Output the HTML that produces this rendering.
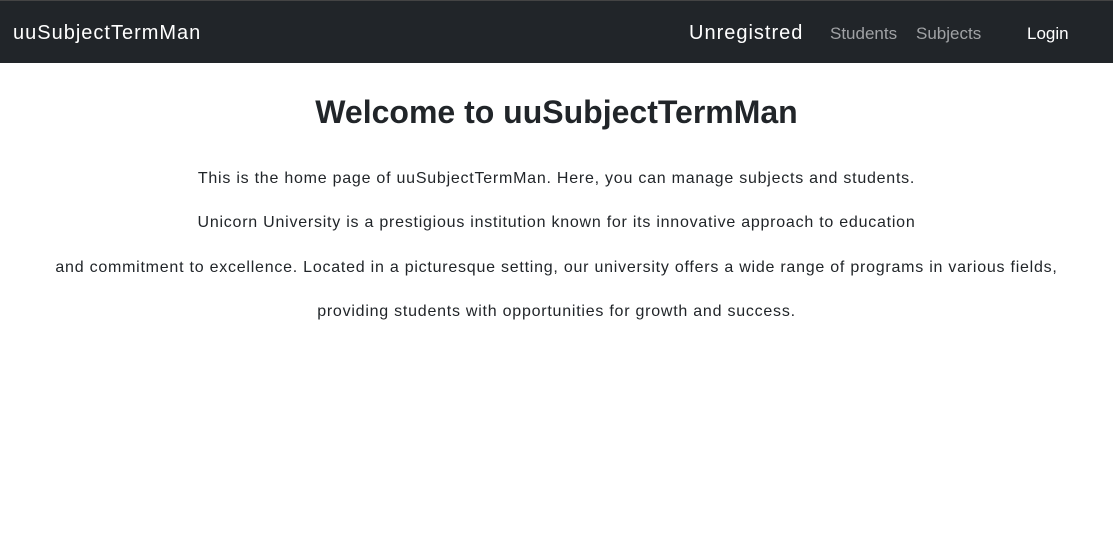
<!DOCTYPE html>
<html><head><style>
body{margin:0;font-family:"Liberation Sans",sans-serif;background:#fff;color:#212529;width:1113px;height:558px;overflow:hidden}
.nav{position:absolute;top:0;left:0;width:1113px;height:62px;background:#212529;border-top:1px solid #444}
.nav span{position:absolute;top:1px;line-height:63px}
h1{position:absolute;top:92px;width:100%;text-align:center;margin:0;font-size:32px;font-weight:bold;line-height:40px}
p{position:absolute;width:100%;text-align:center;margin:0;font-size:16px;line-height:20px;letter-spacing:0.76px}
</style></head><body>
<div class="nav">
<span style="left:13px;font-size:20px;color:#fff;letter-spacing:1px">uuSubjectTermMan</span>
<span style="left:689px;font-size:20px;color:#fff;letter-spacing:1px">Unregistred</span>
<span style="left:830px;font-size:17px;color:#a0a2a5">Students</span>
<span style="left:916px;font-size:17px;color:#a0a2a5">Subjects</span>
<span style="left:1027px;font-size:17px;color:#fff">Login</span>
</div>
<h1>Welcome to uuSubjectTermMan</h1>
<p style="top:169px">This is the home page of uuSubjectTermMan. Here, you can manage subjects and students.</p>
<p style="top:213px">Unicorn University is a prestigious institution known for its innovative approach to education</p>
<p style="top:258px">and commitment to excellence. Located in a picturesque setting, our university offers a wide range of programs in various fields,</p>
<p style="top:302px">providing students with opportunities for growth and success.</p>
</body></html>
